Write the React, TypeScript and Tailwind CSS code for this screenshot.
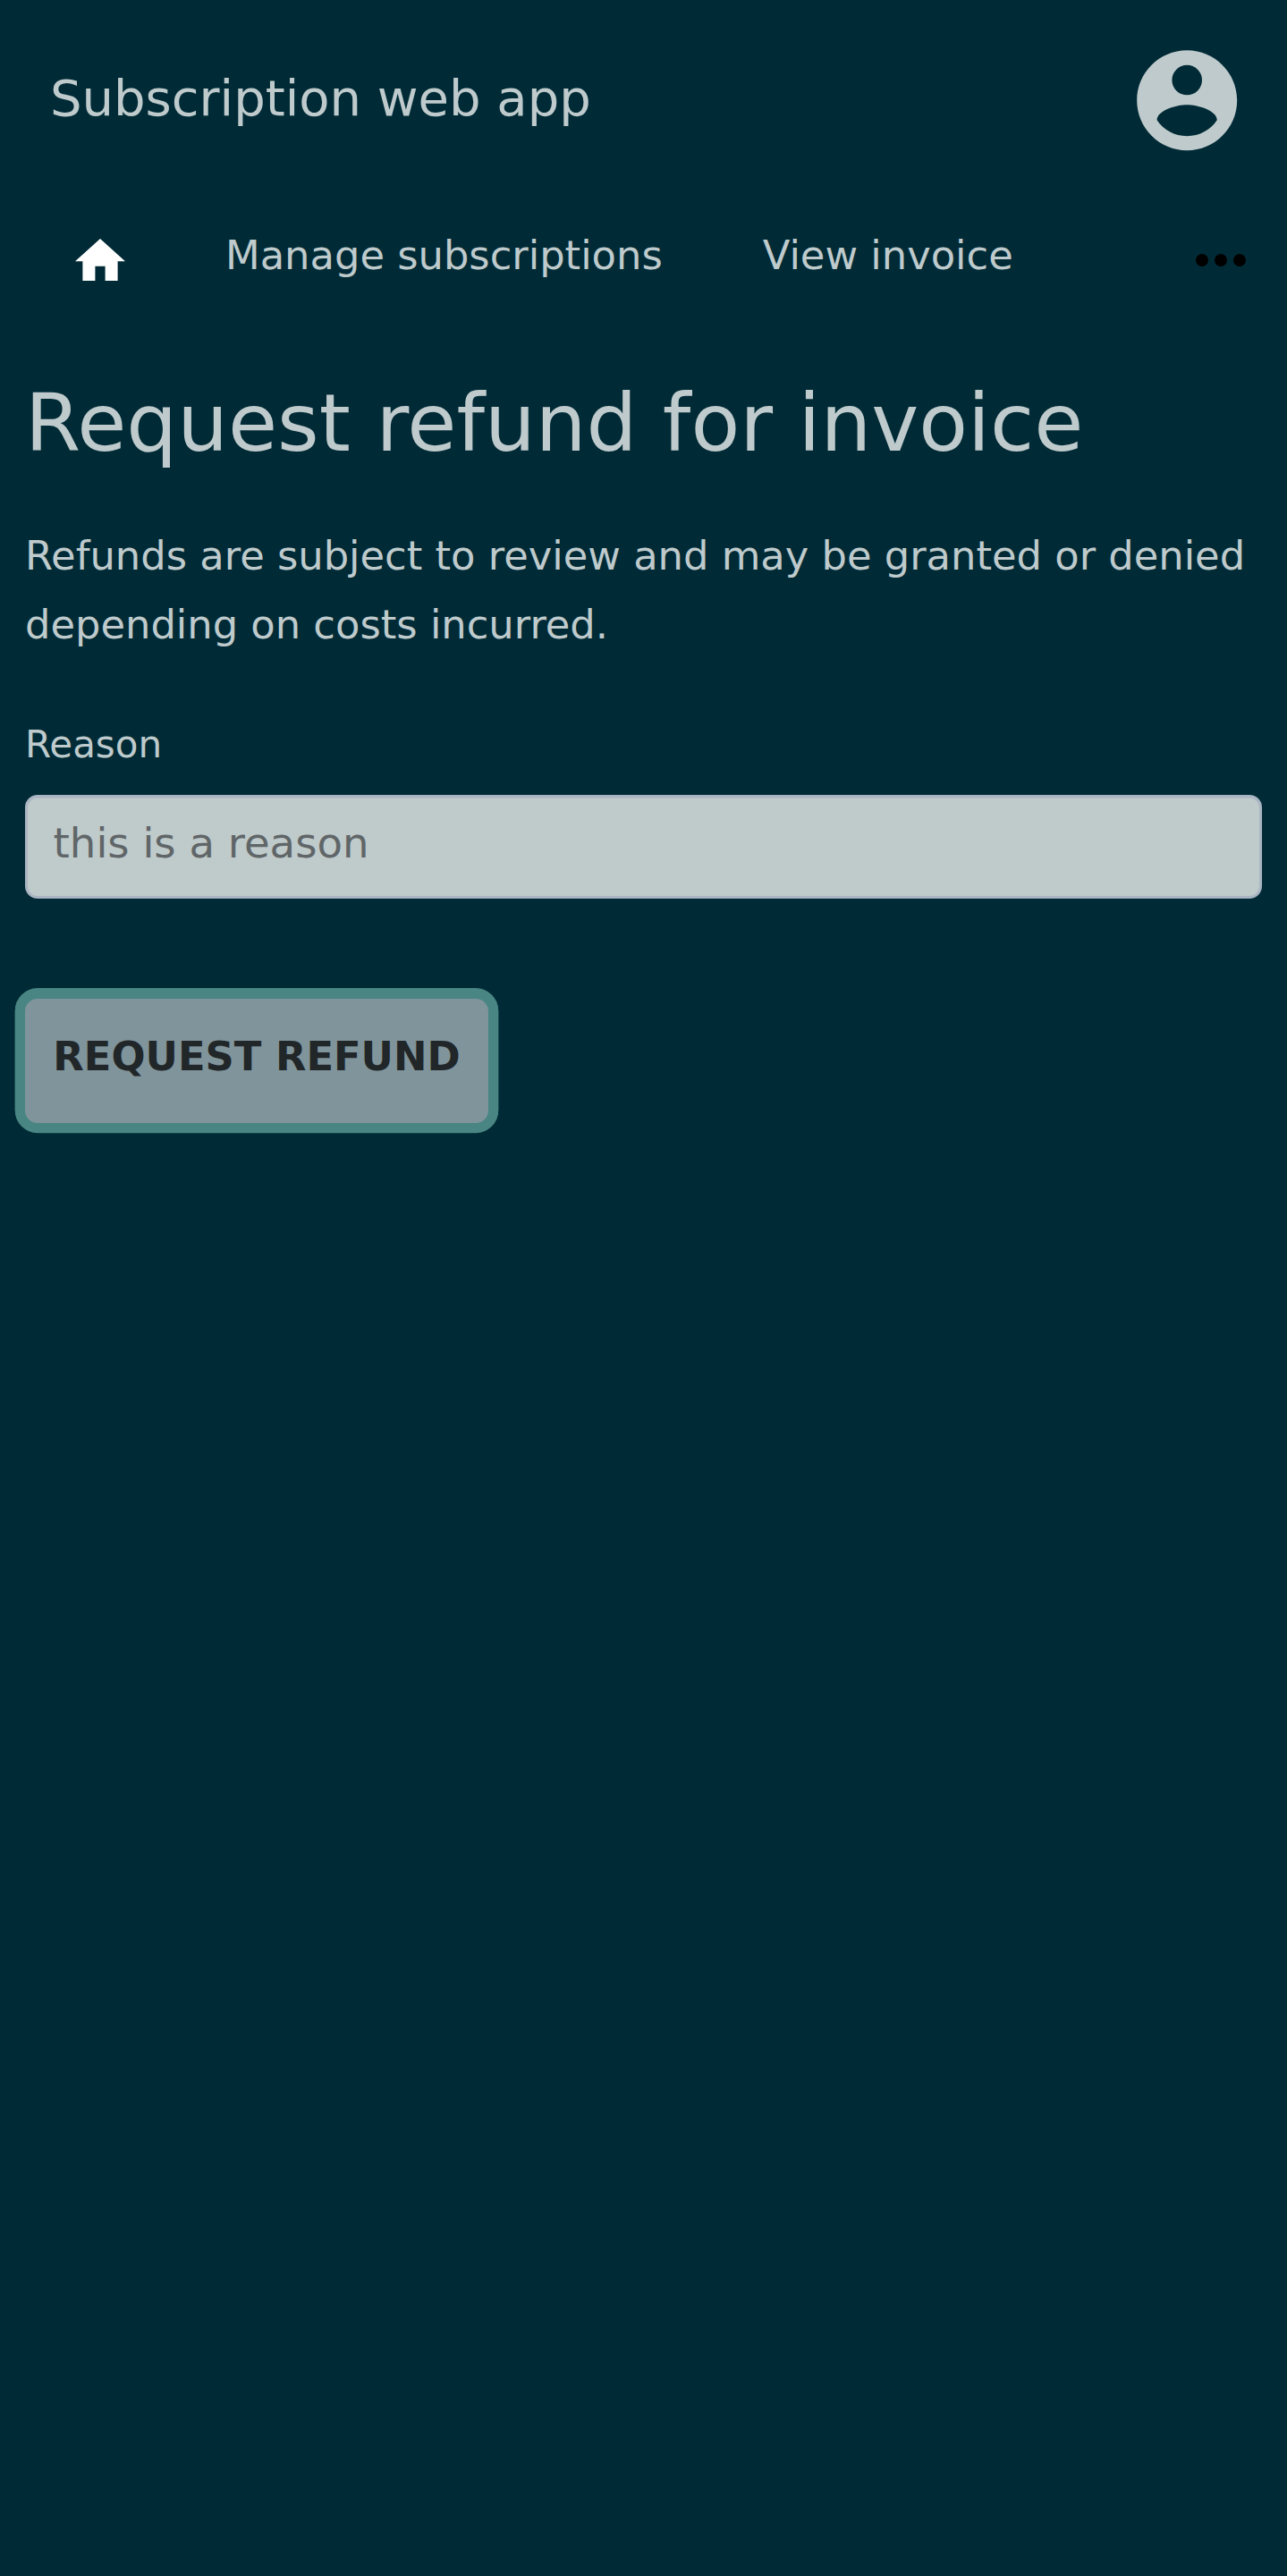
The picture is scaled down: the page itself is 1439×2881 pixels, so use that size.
function AccountIcon() {
  return (
    <svg viewBox="0 0 24 24" className="size-[134.4px] fill-[#bfcacc]" aria-hidden="true">
      <path d="M12 2C6.48 2 2 6.48 2 12s4.48 10 10 10 10-4.48 10-10S17.52 2 12 2zm0 2.95a3 3 0 1 1 0 6 3 3 0 0 1 0-6zm0 14.2c-2.5 0-4.71-1.25-6-3.2.03-1.99 4-3.05 6-3.05 1.99 0 5.97 1.06 6 3.05-1.29 1.95-3.5 3.2-6 3.2z" />
    </svg>
  );
}

function HomeIcon() {
  return (
    <svg viewBox="2 3 20 17" className="h-[47.6px] w-14 fill-white" aria-hidden="true">
      <path d="M10 20v-6h4v6h5v-8h3L12 3 2 12h3v8h5z" />
    </svg>
  );
}

function MoreIcon() {
  return (
    <svg viewBox="4 10 16 4" className="h-3.5 w-14 fill-black" aria-hidden="true">
      <circle cx="6" cy="12" r="2" />
      <circle cx="12" cy="12" r="2" />
      <circle cx="18" cy="12" r="2" />
    </svg>
  );
}

export default function App() {
  return (
    <div className="flex min-h-[2881px] flex-col bg-[#002b36] font-['DejaVu_Sans',sans-serif] text-[44.8px] text-[#bfcacc]">
      <header className="flex h-56 items-center justify-between pr-[45px] pl-14">
        <span className="pb-[5px] text-[56px] leading-[65px]">Subscription web app</span>
        <a href="#account" aria-label="Account">
          <AccountIcon />
        </a>
      </header>

      <nav className="flex h-[133px] items-center gap-28 pr-[46px] pl-[84px]">
        <a href="#home" aria-label="Home">
          <HomeIcon />
        </a>
        <a href="#subscriptions" className="pb-2.5 leading-[53px]">Manage subscriptions</a>
        <a href="#invoice" className="pb-2.5 leading-[53px]">View invoice</a>
        <button type="button" aria-label="More" className="ml-auto">
          <MoreIcon />
        </button>
      </nav>

      <main className="flex flex-col items-start px-7 pt-[60px]">
        <h1 className="text-[89.6px] leading-[112px]">Request refund for invoice</h1>
        <p className="mt-[54px] leading-[77px]">
          Refunds are subject to review and may be granted or denied depending on costs incurred.
        </p>
        <label htmlFor="reason" className="mt-[67px] text-[42px] leading-[57px]">
          Reason
        </label>
        <input
          id="reason"
          placeholder="this is a reason"
          className="mt-7 h-[116px] w-full rounded-[14px] border-3 border-[#a9b5c2] bg-[#bfcacb] px-[28.6px] pb-[9px] text-[46.6px] text-[#212628] shadow-[inset_0_1px_0_#b4bfc9] placeholder:text-[#606668] placeholder:opacity-100"
        />
        <button
          type="button"
          className="mt-28 h-[139px] w-[518px] rounded-[14px] bg-[#80949b] pb-2.5 leading-[53px] font-bold whitespace-nowrap text-[#212628] uppercase shadow-[0_0_0_11.2px_#488583,0_-0.8px_0_11.2px_#488583]"
        >
          Request refund
        </button>
      </main>
    </div>
  );
}
